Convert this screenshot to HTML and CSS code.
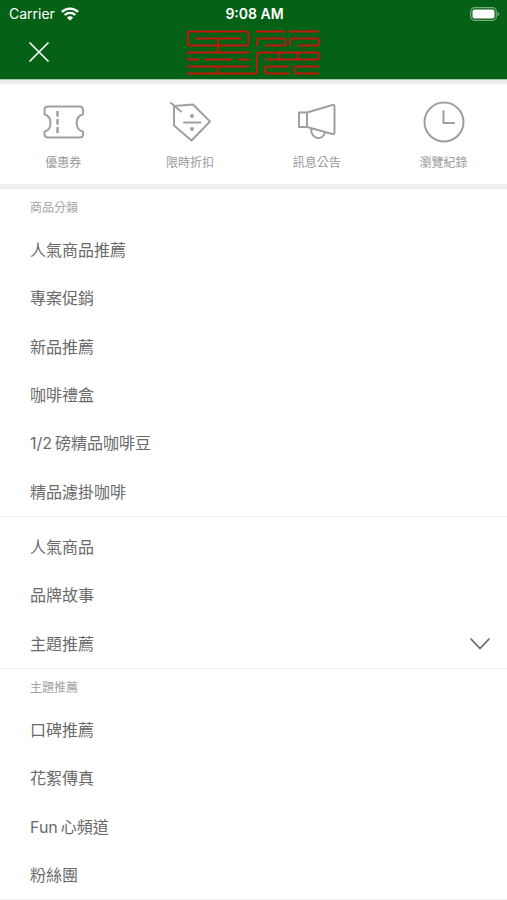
FILE: index.html
```html
<!DOCTYPE html>
<html lang="zh-Hant">
<head>
<meta charset="utf-8">
<meta name="viewport" content="width=device-width, initial-scale=1">
<title>選單</title>
<link rel="stylesheet" href="styles.css">
</head>
<body>
<header class="header">
  <div class="status">
    <span class="carrier">Carrier
      <svg width="18" height="14" viewBox="0 0 18 14" fill="none" stroke="#fff" stroke-width="2.4" aria-hidden="true">
        <path d="M0.9 4.9A11.6 11.6 0 0 1 17.1 4.9"/>
        <path d="M3.7 8A7.6 7.6 0 0 1 14.3 8"/>
        <path d="M9 13.7L5.9 10.6A4.4 4.4 0 0 1 12.1 10.6Z" fill="#fff" stroke="none"/>
      </svg>
    </span>
    <span class="time">9:08 AM</span>
    <svg class="battery" width="30" height="14" viewBox="0 0 30 14" aria-hidden="true">
      <rect x="0.7" y="0.7" width="25.6" height="12.6" rx="3.8" fill="none" stroke="#79aa7e" stroke-width="1.2"/>
      <rect x="2.5" y="2.4" width="22" height="9.2" rx="2" fill="#fff"/>
      <path d="M27.6 4.8Q29.4 5.6 29.4 7T27.6 9.2Z" fill="#79aa7e"/>
    </svg>
  </div>
  <div class="bar">
    <button class="close" type="button" aria-label="關閉">
      <svg width="20" height="20" viewBox="0 0 20 20" fill="none" stroke="#fff" stroke-width="1.7" stroke-linecap="round"><path d="M1 1L19 19M19 1L1 19"/></svg>
    </button>
    <svg class="logo" width="133" height="45" viewBox="0 0 133 45" fill="none" stroke="#c4160a" stroke-width="1.9" stroke-linejoin="round" role="img" aria-label="墨麗">
      <path d="M1 1.5H59Q61.5 1.5 61.5 4V13Q61.5 15.5 59 15.5H3Q1 15.5 1 13V1.5M8 8.5H54M31 8.5V22.5M0 22.5H62.5M0 29.5H12M17 29.5H45.5M50.5 29.5H62.5M0 36.5H62.5M31 36.5V43.5"/>
      <path d="M0 43.5H68Q70 43.5 70 41.5V25.5Q70 22.5 73 22.5H130Q132 22.5 132 24.5V27.5Q132 29.5 130 29.5H78M92 29.5V24.5Q92 22.5 94 22.5M110.5 22.5V29.5"/>
      <path d="M69 1.5H98.5M102 1.5H132M70 16V10.5Q70 8.5 72 8.5H96Q98.5 8.5 98.5 11V13Q98.5 15.5 96 15.5H78M103 16V10.5Q103 8.5 105 8.5H129.5Q132 8.5 132 11V13Q132 15.5 129.5 15.5H111"/>
      <path d="M102 36.5H81Q78 36.5 78 39V41Q78 43.5 81 43.5H102M132 36.5H109.5Q107 36.5 107 39V41Q107 43.5 109.5 43.5H132"/>
    </svg>
  </div>
</header>

<nav class="shortcuts" aria-label="捷徑">
  <a class="shortcut" href="#coupon">
    <svg class="icon" viewBox="0 0 42 42" aria-hidden="true">
      <path d="M6 5.5H38Q41 5.5 41 9V13.2C32.5 15.8 32.5 28.2 41 30.8V33Q41 36.500 38 36.500H6Q2.500 36.500 2.500 33V30.800C10.500 28.200 10.500 15.800 2.500 13.200V9Q2.500 5.500 6 5.500Z"/>
      <path class="dashes" d="M15.500 10V15.500M15.500 18V23.500M15.500 26V32"/>
    </svg>
    <span>優惠券</span>
  </a>
  <a class="shortcut" href="#sale">
    <svg class="icon" viewBox="0 0 42 42" aria-hidden="true">
      <path d="M5 5L24 3.500L41 20.500L22.500 39.500L5 24.500ZM2 2L12 10.500M15 21.500H31.500"/>
      <circle cx="23" cy="15" r="2" class="dot"/><circle cx="23" cy="28" r="2" class="dot"/>
    </svg>
    <span>限時折扣</span>
  </a>
  <a class="shortcut" href="#news">
    <svg class="icon" viewBox="0 0 42 42" aria-hidden="true">
      <path d="M3 11.500H11V26H3ZM11 11.500L36.500 4Q38.500 3.500 38.500 5.500V31.500Q38.500 33.500 36.500 33L11 26M15 27.500C15 39.500 28 39.500 29 31"/>
    </svg>
    <span>訊息公告</span>
  </a>
  <a class="shortcut" href="#history">
    <svg class="icon" viewBox="0 0 42 42" aria-hidden="true">
      <circle cx="21" cy="21" r="19.500"/><path d="M20.500 10V22H31"/>
    </svg>
    <span>瀏覽紀錄</span>
  </a>
</nav>

<main class="menu">
  <section class="group categories">
    <h2>商品分類</h2>
    <ul>
      <li><a href="#c1">人氣商品推薦</a></li>
      <li><a href="#c2">專案促銷</a></li>
      <li><a href="#c3">新品推薦</a></li>
      <li><a href="#c4">咖啡禮盒</a></li>
      <li><a href="#c5"><span class="latin">1/2</span>磅精品咖啡豆</a></li>
      <li><a href="#c6">精品濾掛咖啡</a></li>
    </ul>
  </section>
  <section class="group features">
    <ul>
      <li><a href="#f1">人氣商品</a></li>
      <li><a href="#f2">品牌故事</a></li>
      <li><button class="expander" type="button">主題推薦
        <svg width="20" height="12" viewBox="0 0 20 12" fill="none" stroke="#666" stroke-width="1.7" stroke-linecap="round" stroke-linejoin="round" aria-hidden="true"><path d="M1 1L10 10.5L19 1"/></svg>
      </button></li>
    </ul>
  </section>
  <section class="group topics">
    <h2>主題推薦</h2>
    <ul>
      <li><a href="#t1">口碑推薦</a></li>
      <li><a href="#t2">花絮傳真</a></li>
      <li><a href="#t3"><span class="latin">Fun</span>心頻道</a></li>
      <li><a href="#t4">粉絲團</a></li>
    </ul>
  </section>
</main>
</body>
</html>
```
FILE: styles.css
```css
* {
  box-sizing: border-box;
}

body {
  margin: 0;
  min-height: 100vh;
  display: flex;
  flex-direction: column;
  background: #fff;
  color: #6a6a6a;
  font: 16px/24px Inter, "Noto Sans CJK TC", sans-serif;
}

a {
  color: inherit;
  text-decoration: none;
}

button {
  padding: 0;
  border: 0;
  background: none;
  color: inherit;
  font: inherit;
  cursor: pointer;
}

svg {
  display: block;
  flex: none;
}

.header {
  background: #056116;
  border-bottom: 1px solid #a5c8aa;
  color: #fff;
}

.status,
.bar {
  display: grid;
  grid-template-columns: 1fr auto 1fr;
  align-items: center;
}

.status {
  height: 28px;
  padding: 0 7px 0 9px;
  font-size: 14px;
}

.carrier {
  display: flex;
  align-items: center;
  gap: 6px;
}

.time {
  font-weight: 600;
}

.battery {
  justify-self: end;
}

.bar {
  height: 51px;
  padding: 0 18px 3px;
}

.close {
  width: 42px;
  height: 42px;
  display: grid;
  place-items: center;
}

.shortcuts {
  display: grid;
  grid-template-columns: repeat(4, 1fr);
  height: 109px;
  border-top: 4px solid #eee;
  border-bottom: 5px solid #eee;
  color: #999;
  font-size: 12px;
}

.shortcut {
  display: flex;
  flex-direction: column;
  align-items: center;
  gap: 8px;
  padding-top: 17px;
}

.icon {
  width: 42px;
  height: 42px;
  fill: none;
  stroke: #a0a0a0;
  stroke-width: 2;
  stroke-linecap: round;
  stroke-linejoin: round;
}

.icon .dashes {
  stroke-width: 2.5;
  stroke-linecap: butt;
}

.icon .dot {
  fill: #a0a0a0;
  stroke: none;
}

.menu {
  flex: 1;
  display: flex;
  flex-direction: column;
}

.group {
  display: flex;
  flex-direction: column;
  border-bottom: 1px solid #f0f0f0;
}

.categories {
  flex: 6 0 auto;
}

.features {
  flex: 3 0 auto;
  padding-top: 6px;
}

.topics {
  flex: 4 0 auto;
}

.group h2 {
  margin: 0;
  height: 37px;
  padding: 0 30px;
  color: #a3a3a3;
  font-size: 12px;
  font-weight: 400;
  line-height: 38px;
}

.group ul {
  flex: 1;
  display: flex;
  flex-direction: column;
  margin: 0;
  padding: 0;
  list-style: none;
}

.group li {
  flex: 1 0 48px;
  display: flex;
}

.group li a,
.expander {
  flex: 1;
  display: flex;
  align-items: center;
  padding: 0 17px 0 30px;
}

.expander {
  justify-content: space-between;
}

.latin {
  margin-right: 3px;
}
```
